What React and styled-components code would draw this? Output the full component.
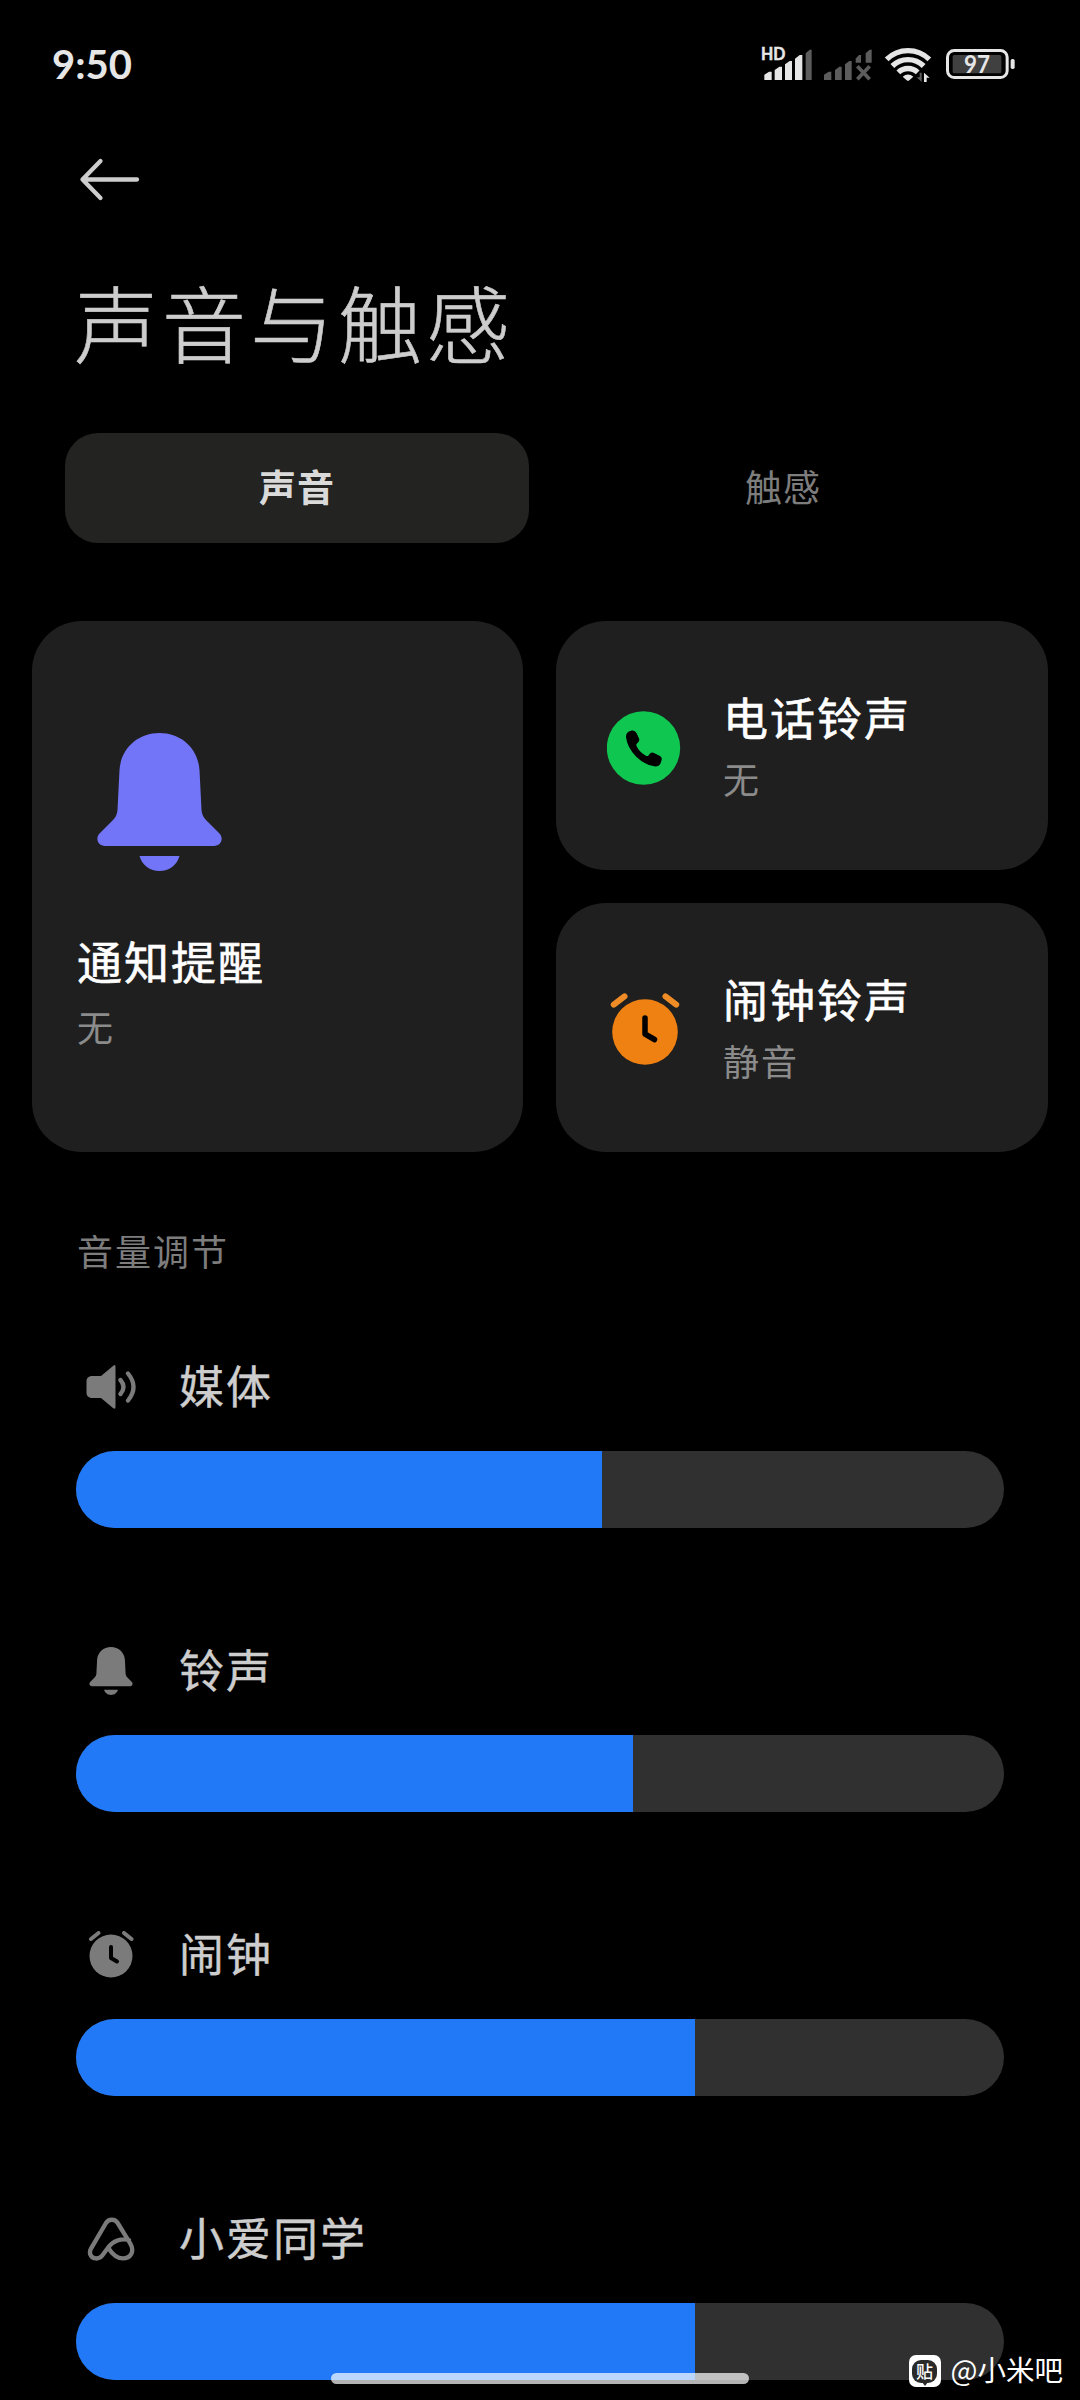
import styled, { createGlobalStyle } from "styled-components";

const GlobalStyle = createGlobalStyle`
  * {
    box-sizing: border-box;
  }

  body {
    margin: 0;
    background: #000;
    font-family: "Noto Sans CJK SC", "Noto Sans", sans-serif;
  }
`;

const cards = [
  { title: "电话铃声", value: "无", icon: "phone" },
  { title: "闹钟铃声", value: "静音", icon: "alarm" },
];

const volumes = [
  { name: "媒体", icon: "speaker", level: 526 / 928 },
  { name: "铃声", icon: "bell", level: 557 / 928 },
  { name: "闹钟", icon: "clock", level: 619 / 928 },
  { name: "小爱同学", icon: "xiaoai", level: 619 / 928 },
];

const SignalIcon = () => (
  <svg width="55" height="40" viewBox="60 45 165 120">
    <text x="63" y="91" fontFamily="Lato, sans-serif" fontWeight="700" fontSize="49" textLength="73" lengthAdjust="spacingAndGlyphs" fill="#e6e6e6" stroke="#e6e6e6" strokeWidth="1.500">HD</text>
    <g fill="#e6e6e6">
      <path d="M73 134l14-9h8v25H73z" />
      <path d="M104 120l14-10h8v40h-22z" />
      <path d="M135 103l14-10h7v57h-21z" />
      <path d="M165 86l14-11h8v75h-22z" />
    </g>
    <path d="M197 70l12-11h6v91h-18z" fill="#5c5c5c" />
  </svg>
);

const NoSignalIcon = () => (
  <svg width="55" height="40" viewBox="240 45 165 120">
    <g fill="#5c5c5c">
      <path d="M252 134l14-9h8v25h-22z" />
      <path d="M285 120l13-10h7v40h-20z" />
      <path d="M315 103l13-10h7v57h-20z" />
      <path d="M347 86l10-11h6v23h-16z" />
      <path d="M377 70l12-11h6v39h-18z" />
    </g>
    <path d="M352 109l37 39M389 109l-37 39" stroke="#5c5c5c" strokeWidth="11" />
  </svg>
);

const WifiIcon = () => (
  <svg width="50" height="40" viewBox="429 45 150 120">
    <g fill="none" stroke="#e6e6e6" strokeWidth="16">
      <path d="M440 88a91 91 0 0 1 128 0" />
      <path d="M457 108a67 67 0 0 1 94 0" />
      <path d="M475 127a42 42 0 0 1 58 0" />
    </g>
    <path d="M488 140q16-13 32 0l-12 11q-4 3-8 0z" fill="#e6e6e6" />
    <path d="M545 128v28l-15-14h9v-14z" fill="#5c5c5c" />
    <path d="M552 156v-28l17 15h-9v13z" fill="#e6e6e6" />
  </svg>
);

const BatteryIcon = () => (
  <svg width="72" height="40" viewBox="612 45 216 120">
    <rect x="622.500" y="61.500" width="179" height="81" rx="20" fill="none" stroke="#e6e6e6" strokeWidth="9" />
    <rect x="638" y="75" width="146" height="55" rx="5" fill="#404040" />
    <rect x="812" y="87" width="12" height="30" rx="5" fill="#e6e6e6" />
    <text x="672" y="129" fontFamily="Lato, sans-serif" fontWeight="700" fontSize="72" textLength="78" lengthAdjust="spacingAndGlyphs" fill="#e6e6e6">97</text>
  </svg>
);

const BackIcon = () => (
  <svg width="64" height="48" viewBox="0 0 64 48" fill="none" stroke="#cdcdcd" strokeWidth="4.300" strokeLinecap="round" strokeLinejoin="round">
    <path d="M24.500 6L6.500 24.500l18 18.500M6.500 24.500H61" />
  </svg>
);

const BellIcon = ({ width, height }) => (
  <svg width={width} height={height} viewBox="0 0 125 138" fill="currentColor">
    <path d="M62.500 0C84 0 101 15 102.500 37L104.500 77Q105 83 109 87L122.500 100.500C127 105.500 124 113 117 113H8C1 113-2 105.500 2.500 100.500L16 87Q20 83 20.500 77L22.500 37C24 15 41 0 62.500 0z" />
    <path d="M42.500 123h40C80 132 72 138 62.500 138S45 132 42.500 123z" />
  </svg>
);

const PhoneIcon = () => (
  <svg width="74" height="74" viewBox="0 0 74 74">
    <circle cx="36.500" cy="37" r="36.700" fill="#0fc750" />
    <path
      d="M20 22Q22 19.500 25 19.500Q28 19 29.500 22L32 27.500Q33 30 31 31.500L29.500 33Q29 34 30 36Q33 41.500 38.500 44.500Q40.500 45.500 41.500 44.500L43 42.500Q44.500 41 47 42L53 45Q55.500 46.500 54.500 49.500L53.500 52.500Q52 55.500 48.500 55.500Q38 54.500 29 45.500Q20 36 19 26Q19 23.500 20 22z"
      fill="#000"
    />
  </svg>
);

const AlarmIcon = () => (
  <svg width="74" height="74" viewBox="0 0 74 74" fill="none" strokeLinecap="round">
    <circle cx="38" cy="39" r="32.800" fill="#ef8113" />
    <path d="M6.800 11.700L17.500 3.300M58.500 3.300L69.200 11.700" stroke="#ef8c26" strokeWidth="6" />
    <path d="M38 25v16l9.500 5.500" stroke="#000" strokeWidth="5.500" strokeLinejoin="round" />
  </svg>
);

const SpeakerIcon = () => (
  <svg width="50" height="44" viewBox="0 0 50 44" fill="none">
    <path d="M5 11h10L27 .9q2.500-2 2.500 1v40q0 3-2.500 1L15 33H5q-4.500-1-4.500-5V16Q.5 12 5 11z" fill="#7b7b7b" />
    <path d="M34.500 15q6 7 0 14M42 8.500q11 13.500 0 27" stroke="#7b7b7b" strokeWidth="4.300" strokeLinecap="round" />
  </svg>
);

const ClockIcon = () => (
  <svg width="46" height="48" viewBox="0 0 46 48" fill="none" strokeLinecap="round">
    <circle cx="23" cy="25" r="21.500" fill="#7b7b7b" />
    <path d="M3 8l7.500-6M36 2l7.500 6" stroke="#7b7b7b" strokeWidth="4" />
    <path d="M23 16v11l6 3.500" stroke="#000" strokeWidth="4" strokeLinejoin="round" />
  </svg>
);

const XiaoaiIcon = () => (
  <svg width="48" height="44" viewBox="82 80 144 132" fill="none" stroke="#7b7b7b" strokeWidth="13" strokeLinecap="round" strokeLinejoin="round">
    <path d="M208 149C184 143 160 152 146 171L129 194C118 209 98 207 92 193Q89 184 94 175L139 98C147 85 166 85 174 98L212 160C226 185 212 204 190 204C170 204 158 192 147 174" />
  </svg>
);

const icons = {
  phone: <PhoneIcon />,
  alarm: <AlarmIcon />,
  speaker: <SpeakerIcon />,
  bell: <BellIcon width={44} height={48} />,
  clock: <ClockIcon />,
  xiaoai: <XiaoaiIcon />,
};

const App = () => {
  return (
    <Screen>
      <GlobalStyle />
      <StatusBar>
        <Time>9:50</Time>
        <SignalIcon />
        <NoSignalIcon />
        <WifiIcon />
        <BatteryIcon />
      </StatusBar>

      <Header>
        <BackButton aria-label="back">
          <BackIcon />
        </BackButton>
        <Title>声音与触感</Title>
      </Header>

      <Tabs>
        <Tab $active>声音</Tab>
        <Tab>触感</Tab>
      </Tabs>

      <CardGrid>
        <NoticeCard>
          <BellIcon width={125} height={138} />
          <CardTitle>通知提醒</CardTitle>
          <CardValue $gap={11}>无</CardValue>
        </NoticeCard>
        {cards.map((card) => (
          <RingCard key={card.title}>
            <RingIcon>{icons[card.icon]}</RingIcon>
            <div>
              <CardTitle>{card.title}</CardTitle>
              <CardValue $gap={7}>{card.value}</CardValue>
            </div>
          </RingCard>
        ))}
      </CardGrid>

      <SectionLabel>音量调节</SectionLabel>
      <VolumeList>
        {volumes.map((item) => (
          <div key={item.name}>
            <VolumeHead>
              <VolumeIcon>{icons[item.icon]}</VolumeIcon>
              {item.name}
            </VolumeHead>
            <Track>
              <Fill style={{ width: `${item.level * 100}%` }} />
            </Track>
          </div>
        ))}
      </VolumeList>

      <HomeIndicator />
      <Watermark>
        <Badge>
          <BadgeFace>贴</BadgeFace>
        </Badge>
        @小米吧
      </Watermark>
    </Screen>
  );
};

const Screen = styled.main`
  position: relative;
  width: 1080px;
  height: 2400px;
  overflow: hidden;
  background: #000;
  color: #cdcdcd;
`;

const StatusBar = styled.div`
  display: flex;
  align-items: center;
  height: 130px;
  padding: 0 64px 0 52px;

  svg + svg {
    margin-left: 5px;
  }

  svg:nth-of-type(3) {
    margin-left: 8px;
  }

  svg:nth-of-type(4) {
    margin-left: 11px;
  }
`;

const Time = styled.span`
  margin-right: auto;
  padding-bottom: 2px;
  font: 700 40px/50px Lato, sans-serif;
  color: #e6e6e6;
`;

const Header = styled.header`
  padding: 25px 76px 0;
`;

const BackButton = styled.button`
  display: block;
  padding: 0;
  border: 0;
  background: none;
  height: 49px;
`;

const Title = styled.h1`
  margin: 62px 0 0 -2px;
  font-size: 84px;
  line-height: 110px;
  font-weight: 300;
  letter-spacing: 4px;
  -webkit-text-stroke: 0.6px currentColor;
`;

const Tabs = styled.nav`
  display: grid;
  grid-template-columns: 464px 464px;
  gap: 22px;
  margin: 57px 65px 0;
`;

const Tab = styled.button`
  height: 110px;
  padding: 0 0 5px;
  border: 0;
  border-radius: 33px;
  background: ${({ $active }) => ($active ? "#232321" : "transparent")};
  color: ${({ $active }) => ($active ? "#dadada" : "#7d7d7d")};
  font-family: inherit;
  font-size: 37px;
  font-weight: ${({ $active }) => ($active ? 700 : 400)};
  letter-spacing: 1px;
`;

const CardGrid = styled.section`
  display: grid;
  grid-template-columns: 491px 492px;
  grid-template-rows: 249px 249px;
  gap: 33px;
  margin: 78px 32px 0;
`;

const Card = styled.article`
  display: flex;
  border-radius: 50px;
  background: #1f1f1f;
`;

const NoticeCard = styled(Card)`
  grid-row: span 2;
  flex-direction: column;
  padding: 112px 45px 0;

  svg {
    margin: 0 0 60px 20px;
    color: #7275f7;
  }
`;

const RingCard = styled(Card)`
  padding: 66px 51px 0;
`;

const RingIcon = styled.div`
  width: 116px;
  padding-top: 24px;
`;

const CardTitle = styled.h2`
  margin: 0;
  font-size: 45px;
  line-height: 60px;
  font-weight: 400;
  letter-spacing: 2px;
  color: #fff;
  -webkit-text-stroke: 0.6px currentColor;
`;

const CardValue = styled.p`
  margin: ${({ $gap }) => $gap}px 0 0;
  font-size: 36px;
  line-height: 48px;
  letter-spacing: 2px;
  color: #8b8b8b;
`;

const SectionLabel = styled.h3`
  margin: 74px 77px 0;
  font-size: 36px;
  line-height: 48px;
  font-weight: 400;
  letter-spacing: 2px;
  color: #7d7d7d;
`;

const VolumeList = styled.section`
  display: grid;
  grid-auto-rows: 284px;
  margin: 75px 76px 0;
`;

const VolumeHead = styled.div`
  display: flex;
  align-items: center;
  height: 70px;
  padding-top: 1px;
  font-size: 45px;
  line-height: 60px;
  letter-spacing: 2px;
  -webkit-text-stroke: 0.4px currentColor;
`;

const VolumeIcon = styled.span`
  display: flex;
  justify-content: center;
  width: 70px;
  margin-right: 33px;
  padding-top: 4px;
  color: #7b7b7b;
`;

const Track = styled.div`
  height: 77px;
  margin-top: 32px;
  border-radius: 39px;
  background: #303030;
  overflow: hidden;
`;

const Fill = styled.div`
  height: 100%;
  background: #2179f7;
`;

const HomeIndicator = styled.div`
  position: absolute;
  left: 331px;
  bottom: 16px;
  width: 418px;
  height: 11px;
  border-radius: 6px;
  background: rgba(255, 255, 255, 0.7);
`;

const Watermark = styled.div`
  position: absolute;
  right: 17px;
  bottom: 11px;
  display: flex;
  align-items: center;
  font-size: 28.5px;
  line-height: 40px;
  color: #fff;
`;

const Badge = styled.span`
  display: grid;
  place-items: center;
  width: 32px;
  height: 32px;
  margin: 4px 10px 0 0;
  border-radius: 7px;
  background: #fff;
`;

// dark speech bubble with a small tail at the bottom
const BadgeFace = styled.span`
  position: relative;
  width: 25px;
  height: 23px;
  border-radius: 9px;
  background: #2a2a2a;
  font-size: 17px;
  line-height: 21px;
  font-weight: 500;
  text-align: center;

  &::after {
    content: "";
    position: absolute;
    left: 10px;
    bottom: -3px;
    border: solid transparent;
    border-width: 4px 3px 0;
    border-top-color: #2a2a2a;
  }
`;

export default App;
